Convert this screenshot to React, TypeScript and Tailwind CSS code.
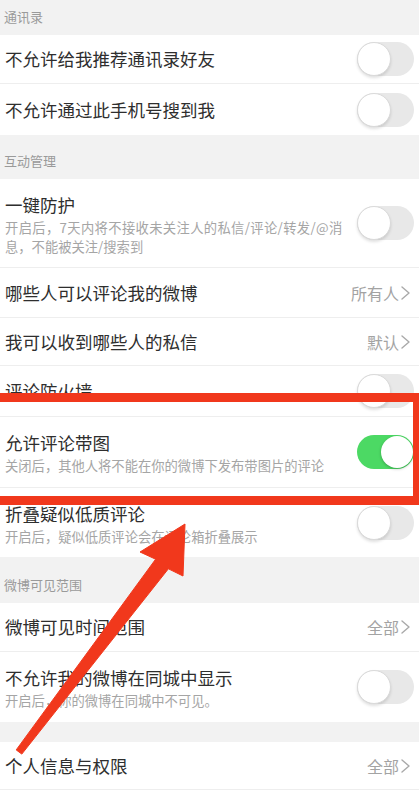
import React from "react";

const Toggle = ({ on }: { on?: boolean }) =>
  on ? (
    <div className="relative w-[57px] h-[34px] rounded-full bg-[#4cd964] shrink-0">
      <div className="absolute right-[1px] top-[1px] w-[32px] h-[32px] rounded-full bg-white shadow-[0_1px_3px_rgba(0,0,0,0.25)]" />
    </div>
  ) : (
    <div className="relative w-[57px] h-[34px] rounded-full bg-[#e8e8e8] shrink-0">
      <div className="absolute left-0 top-0 w-[34px] h-[34px] rounded-full bg-white border border-[#dadada] shadow-[0_2px_3px_rgba(0,0,0,0.12)]" />
    </div>
  );

const Chevron = () => (
  <svg width="11" height="16" viewBox="0 0 11 16" className="ml-[1px]">
    <polyline points="2,2 9,8 2,14" fill="none" stroke="#a9a9a9" strokeWidth="1.4" strokeLinecap="round" strokeLinejoin="round" />
  </svg>
);

const Header = ({ text, h }: { text?: string; h: string }) => (
  <div className={`flex items-end bg-[#f2f2f2] pl-[4px] pb-[10px] ${h}`}>
    {text && <span className="text-[13px] leading-[16px] text-[#9a9a9a]">{text}</span>}
  </div>
);

const ToggleRow = ({ title, h, on, border = true }: { title: string; h: string; on?: boolean; border?: boolean }) => (
  <div className={`flex items-center justify-between bg-white pl-[5px] pr-[5px] ${border ? "border-b border-[#eeeeee]" : ""} ${h}`}>
    <span className="text-[17.5px] leading-[22px] text-[#2e2e2e]">{title}</span>
    <Toggle on={on} />
  </div>
);

const ValueRow = ({ title, value, h, border = true }: { title: string; value: string; h: string; border?: boolean }) => (
  <div className={`flex items-center justify-between bg-white pl-[5px] pr-[8px] ${border ? "border-b border-[#eeeeee]" : ""} ${h}`}>
    <span className="text-[17.5px] leading-[22px] text-[#2e2e2e]">{title}</span>
    <div className="flex items-center">
      <span className="text-[16px] leading-[20px] text-[#a3a3a3]">{value}</span>
      <Chevron />
    </div>
  </div>
);

const SubRow = ({ title, sub, h, on, border = true }: { title: string; sub: React.ReactNode; h: string; on?: boolean; border?: boolean }) => (
  <div className={`flex items-center justify-between gap-[8px] bg-white pl-[5px] pr-[5px] ${border ? "border-b border-[#eeeeee]" : ""} ${h}`}>
    <div className="self-start pt-[15px] flex flex-col">
      <span className="text-[17.5px] leading-[22px] text-[#2e2e2e]">{title}</span>
      <span className="mt-[2px] text-[13.3px] leading-[19px] text-[#a5a5a5] whitespace-nowrap">{sub}</span>
    </div>
    <Toggle on={on} />
  </div>
);

export default function App() {
  return (
    <div className="relative w-[419px] h-[791px] overflow-hidden bg-white font-['Noto_Sans_CJK_SC','Noto_Sans',sans-serif]">
      <Header text="通讯录" h="h-[35px]" />
      <ToggleRow title="不允许给我推荐通讯录好友" h="h-[49px]" />
      <ToggleRow title="不允许通过此手机号搜到我" h="h-[51px]" border={false} />
      <Header text="互动管理" h="h-[44px]" />
      <SubRow
        title="一键防护"
        h="h-[89px]"
        sub={
          <>
            <span className="tracking-[0.35px]">开启后，7天内将不接收未关注人的私信/评论/转发/@消</span>
            <br />
            息，不能被关注/搜索到
          </>
        }
      />
      <ValueRow title="哪些人可以评论我的微博" value="所有人" h="h-[50px]" />
      <ValueRow title="我可以收到哪些人的私信" value="默认" h="h-[48px]" />
      <ToggleRow title="评论防火墙" h="h-[51px]" />
      <SubRow title="允许评论带图" sub="关闭后，其他人将不能在你的微博下发布带图片的评论" h="h-[71px]" on />
      <SubRow title="折叠疑似低质评论" sub="开启后，疑似低质评论会在评论箱折叠展示" h="h-[69px]" border={false} />
      <Header text="微博可见范围" h="h-[46px]" />
      <ValueRow title="微博可见时间范围" value="全部" h="h-[49px]" />
      <SubRow title="不允许我的微博在同城中显示" sub="开启后，你的微博在同城中不可见。" h="h-[70px]" border={false} />
      <Header h="h-[20px]" />
      <ValueRow title="个人信息与权限" value="全部" h="h-[48px]" />
      <div className="h-[10px] bg-white" />

      {/* annotation: red box */}
      <div className="absolute left-[-10px] top-[393px] w-[432px] h-[112px] border-[9px] border-[#f1381c] pointer-events-none" />

      {/* annotation: arrow */}
      <svg className="absolute left-0 top-0 pointer-events-none" width="419" height="791" viewBox="0 0 419 791">
        <polygon
          points="185,524 183,576 168.4,568.8 21.8,754.1 16.2,749.9 155.6,559.2 140,552"
          fill="#f1381c"
          strokeLinejoin="round"
          stroke="#f1381c"
          strokeWidth="1"
        />
      </svg>
    </div>
  );
}
